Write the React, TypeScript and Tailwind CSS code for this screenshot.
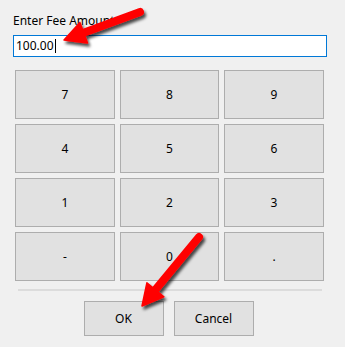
import React from "react";

const keys = ["7", "8", "9", "4", "5", "6", "1", "2", "3", "-", "0", "."];

function Arrow({ tail, tip }: { tail: [number, number]; tip: [number, number] }) {
  const dx = tip[0] - tail[0];
  const dy = tip[1] - tail[1];
  const len = Math.hypot(dx, dy);
  const ux = dx / len;
  const uy = dy / len;
  const px = -uy;
  const py = ux;
  const headLen = 21;
  const half = 11;
  const bx = tip[0] - headLen * ux;
  const by = tip[1] - headLen * uy;
  const pts = [
    [tip[0], tip[1]],
    [bx + half * px, by + half * py],
    [bx - half * px, by - half * py],
  ]
    .map((p) => p.join(","))
    .join(" ");
  return (
    <g filter="url(#shadow)">
      <line
        x1={tail[0]}
        y1={tail[1]}
        x2={bx + 3 * ux}
        y2={by + 3 * uy}
        stroke="#ff0000"
        strokeWidth={8}
        strokeLinecap="round"
      />
      <polygon points={pts} fill="#ff0000" stroke="#ff0000" strokeWidth={1.5} strokeLinejoin="round" />
    </g>
  );
}

export default function App() {
  return (
    <div
      className="relative w-[345px] h-[347px] bg-[#f0f0f0] text-[12px] text-black overflow-hidden"
      style={{ fontFamily: '"Segoe UI", "Noto Sans", sans-serif' }}
    >
      <div className="pt-[13px] pl-[13px]">
        <div className="h-[16px] leading-[16px]">Enter Fee Amount</div>
        <div className="mt-[6px] w-[314px] h-[22px] border border-[#0078d7] bg-white flex items-center pl-[2px] leading-none">
          <span>100.00</span>
          <span className="w-px h-[14px] bg-black ml-px" />
        </div>
      </div>

      <div className="ml-[15px] mt-[13px] w-[309px]">
        <div className="grid grid-cols-[100px_99px_100px] auto-rows-[49px] gap-[5px]">
          {keys.map((k) => (
            <div
              key={k}
              className="flex items-center justify-center border border-[#adadad] bg-[#e1e1e1]"
            >
              {k}
            </div>
          ))}
        </div>
        <div className="mt-[8px] ml-[3px] w-[304px] h-[2px] bg-[#dcdcdc]" />
        <div className="mt-[10px] flex justify-center gap-[10px] pr-[2px]">
          <div className="w-[80px] h-[35px] flex items-center justify-center border border-[#adadad] bg-[#e1e1e1]">
            OK
          </div>
          <div className="w-[80px] h-[35px] flex items-center justify-center border border-[#adadad] bg-[#e1e1e1]">
            Cancel
          </div>
        </div>
      </div>

      <svg className="absolute inset-0 pointer-events-none" width={345} height={347}>
        <defs>
          <filter id="shadow" x="-20%" y="-20%" width="140%" height="140%">
            <feDropShadow dx="2" dy="3" stdDeviation="1.5" floodColor="#000" floodOpacity="0.7" />
          </filter>
        </defs>
        <Arrow tail={[140, 12]} tip={[64, 40]} />
        <Arrow tail={[199, 237]} tip={[142, 306]} />
      </svg>
    </div>
  );
}
